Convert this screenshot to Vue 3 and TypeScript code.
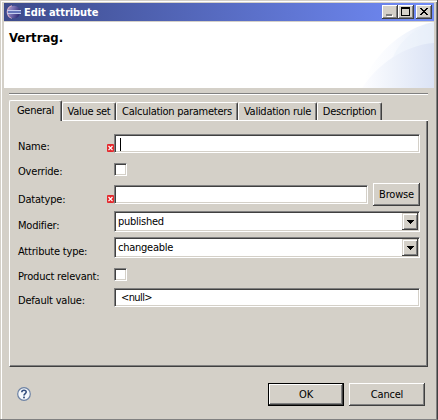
<script setup lang="ts">
import { ref } from 'vue'

interface Field {
  id: string
  label: string
  kind: 'text' | 'check' | 'combo'
  value?: string
  error?: boolean
  caret?: boolean
  browse?: boolean
}

const tabs = [
  { id: 'general', label: 'General' },
  { id: 'values', label: 'Value set' },
  { id: 'calculation', label: 'Calculation parameters' },
  { id: 'validation', label: 'Validation rule' },
  { id: 'description', label: 'Description' },
]
const activeTab = ref('general')

const fields: Field[] = [
  { id: 'name', label: 'Name:', kind: 'text', error: true, caret: true },
  { id: 'override', label: 'Override:', kind: 'check' },
  { id: 'datatype', label: 'Datatype:', kind: 'text', error: true, browse: true },
  { id: 'modifier', label: 'Modifier:', kind: 'combo', value: 'published' },
  { id: 'attrtype', label: 'Attribute type:', kind: 'combo', value: 'changeable' },
  { id: 'relevant', label: 'Product relevant:', kind: 'check' },
  { id: 'default', label: 'Default value:', kind: 'text', value: '<null>' },
]
</script>

<template>
  <div class="window">
    <header class="titlebar">
      <svg class="logo" width="16" height="16" viewBox="0 0 16 16">
        <defs>
          <linearGradient id="orb" x1="0" y1="0" x2="1" y2="0.4">
            <stop offset="0" stop-color="#b9a0c8" />
            <stop offset="0.45" stop-color="#7a72b4" />
            <stop offset="1" stop-color="#35307c" />
          </linearGradient>
        </defs>
        <path d="M6 2C0 4 0 12 6 14" fill="none" stroke="#dcb0c4" stroke-width="1.6" />
        <circle cx="8" cy="8" r="6.3" fill="url(#orb)" />
        <path d="M1 6.5H15M1 9.5H15" stroke="#c3cbee" stroke-width="1" />
        <path d="M2 8H15" stroke="#6474ba" stroke-width="2" />
      </svg>
      <span class="title">Edit attribute</span>
      <button class="ctl"><svg width="12" height="10"><path d="M2 8H8" stroke="#fff" stroke-width="2" transform="translate(1 1)" /><path d="M2 8H8" stroke="#808080" stroke-width="2" /></svg></button>
      <button class="ctl"><svg width="12" height="10" shape-rendering="crispEdges"><path d="M1 0h9v9H1zM2 2v6h7V2z" fill="#000" fill-rule="evenodd" /></svg></button>
      <button class="ctl close"><svg width="12" height="10" shape-rendering="crispEdges"><path d="M2 1h2v1h1v1h2V2h1V1h2v1H9v1H8v1H7v1h1v1h1v1h1v1H8V7H7V6H5v1H4v1H2V7h1V6h1V5h1V4H4V3H3V2H2z" fill="#000" /></svg></button>
    </header>

    <section class="banner">
      <h1>Vertrag.</h1>
      <svg class="waves" width="74" height="66" viewBox="0 0 74 66">
        <defs>
          <linearGradient id="w1"><stop offset="0" stop-color="#fff" /><stop offset=".4" stop-color="#f8fafe" /><stop offset="1" stop-color="#e6edf9" /></linearGradient>
          <linearGradient id="w2"><stop offset="0" stop-color="#fdfdff" /><stop offset=".4" stop-color="#eff3fb" /><stop offset="1" stop-color="#dbe3f5" /></linearGradient>
        </defs>
        <path d="M5 55C19 29 43 6 74 0V66H5z" fill="url(#w1)" />
        <path d="M32 37C40 19 52 8 74 0V66H32z" fill="#e8effa" opacity=".4" />
        <path d="M2 66C17 43 44 23 74 21V66z" fill="url(#w2)" />
      </svg>
    </section>
    <div class="rule"></div>

    <nav class="tabs">
      <button v-for="t in tabs" :key="t.id" :class="['tab', t.id, { active: activeTab === t.id }]" @click="activeTab = t.id"><span>{{ t.label }}</span></button>
    </nav>

    <main class="panel">
      <div v-for="f in fields" :key="f.id" :class="['row', f.id]">
        <label>{{ f.label }}</label>
        <div class="mark">
          <svg v-if="f.error" width="7" height="8" viewBox="0 0 7 8">
            <rect width="7" height="8" rx="1" fill="#e4282c" />
            <path d="M1.5 2L5.5 6.2M5.5 2L1.5 6.2" stroke="#fff" stroke-width="1.2" />
          </svg>
        </div>
        <div v-if="f.kind === 'text'" class="sunken input"><i v-if="f.caret" class="caret"></i><span>{{ f.value }}</span></div>
        <div v-else-if="f.kind === 'combo'" class="sunken combo">
          <span>{{ f.value }}</span>
          <button class="drop"><svg width="7" height="4" shape-rendering="crispEdges"><path d="M0 0h7v1H6v1H5v1H4v1H3V3H2V2H1V1H0z" /></svg></button>
        </div>
        <div v-else class="sunken check"></div>
        <button v-if="f.browse" class="push browse"><span>Browse</span></button>
      </div>
    </main>

    <footer class="actions">
      <svg class="help" width="14" height="14" viewBox="0 0 14 14">
        <circle cx="7" cy="7" r="6.3" fill="#f4f7fb" stroke="#6d82a4" stroke-width="1.2" />
        <path d="M4.8 5.2C4.8 2.6 9.2 2.6 9.2 5.1C9.2 6.7 7 6.6 7 8.6" fill="none" stroke="#344f7e" stroke-width="1.6" />
        <rect x="6.1" y="9.6" width="1.8" height="1.7" fill="#344f7e" />
      </svg>
      <button class="push ok"><span>OK</span></button>
      <button class="push cancel"><span>Cancel</span></button>
    </footer>
  </div>
</template>

<style>
body { margin: 0; background: #d4d0c8; }
</style>

<style scoped>
* { box-sizing: border-box; }
.window {
  width: 438px; height: 420px; background: #d4d0c8; overflow: hidden;
  display: flex; flex-direction: column;
  font: 11px/14px "DejaVu Sans Condensed", "DejaVu Sans", sans-serif; font-stretch: condensed; letter-spacing: -0.2px; color: #000;
  padding: 1px 2px 0 2px;
  border-right: 1px solid #404040; border-bottom: 1px solid #808080;
  box-shadow: inset 1px 0 #d4d0c8, inset 0 1px #d4d0c8, inset 2px 2px #fff, inset -1px 0 #808080;
}
button { font: inherit; letter-spacing: inherit; color: inherit; background: #d4d0c8; border: 0; padding: 0; margin: 0; display: flex; align-items: center; justify-content: center; }
svg { display: block; flex: none; }
span, label { white-space: pre; }
.titlebar { height: 18px; margin: 2px 1px 0 2px; display: flex; align-items: center; padding-right: 2px; background: linear-gradient(90deg, #3d4b8b, #718bf7); flex: none; }
.logo { margin-left: 2px; }
.title { flex: 1; margin: 1px 0 0 2px; color: #fff; font-weight: bold; letter-spacing: -0.08px; }
.ctl { width: 16px; height: 14px; box-shadow: inset -1px -1px #404040, inset 1px 1px #fff, inset -2px -2px #808080; }
.close { margin-left: 2px; }
.banner { height: 66px; margin: 1px 1px 0 2px; background: #fff; display: flex; justify-content: space-between; flex: none; }
h1 { margin: 8px 0 0 5px; font-size: 13px; line-height: 16px; letter-spacing: 0; }
.rule { height: 2px; margin: 5px 7px 0; background: linear-gradient(#808080 50%, #fff 50%); flex: none; }
.tabs { display: flex; align-items: flex-end; height: 21px; margin: 5px 7px 0; box-shadow: inset 0 -1px #fff; flex: none; }
.tab { height: 18px; margin-bottom: 1px; padding-top: 1px; border-top: 1px solid #fff; border-left: 1px solid #fff; border-right: 1px solid #404040; border-radius: 2px 2px 0 0; box-shadow: inset -1px 0 #808080; letter-spacing: -0.27px; }
.tab.active { height: 21px; margin-bottom: 0; padding: 0 0 1px; }
.general { width: 53px; }
.values { width: 54px; }
.calculation { width: 122px; }
.validation { width: 79px; }
.description { width: 65px; }
.panel { height: 246px; margin: 0 7px; padding: 13px 7px 0 8px; border-left: 1px solid #fff; border-right: 1px solid #404040; border-bottom: 1px solid #404040; box-shadow: inset -1px -1px #808080; flex: none; }
.row { display: flex; }
label { width: 89px; align-self: flex-end; margin-bottom: -1px; }
.mark { width: 7px; align-self: flex-end; margin-bottom: 1px; }
.sunken { background: #fff; border: 1px solid; border-color: #808080 #fff #fff #808080; box-shadow: inset 1px 1px #404040, inset -1px -1px #d4d0c8; }
.input { flex: 1; height: 19px; display: flex; align-items: center; padding: 1px 0 0 5px; }
.default .input { padding-left: 6px; letter-spacing: -0.6px; }
.caret { width: 1px; height: 13px; background: #000; }
.combo { flex: 1; height: 21px; display: flex; align-items: center; justify-content: space-between; padding: 1px 1px 1px 3px; }
.combo span { padding-top: 1px; letter-spacing: -0.25px; }
.drop { width: 16px; height: 17px; box-shadow: inset -1px -1px #404040, inset 1px 1px #d4d0c8, inset 2px 2px #fff, inset -2px -2px #808080; }
.check { width: 13px; height: 13px; }
.name { height: 19px; margin-bottom: 10px; }
.override { height: 13px; margin-bottom: 7px; }
.datatype { height: 23px; margin-bottom: 5px; }
.datatype .input { margin-top: 2px; }
.datatype .mark { margin-bottom: 3px; }
.modifier { height: 21px; margin-bottom: 5px; }
.attrtype { height: 21px; margin-bottom: 10px; }
.relevant { height: 13px; margin-bottom: 7px; }
.override label, .relevant label { margin-bottom: -3px; }
.push { height: 23px; box-shadow: inset -1px -1px #404040, inset 1px 1px #fff, inset -2px -2px #808080; }
.browse { width: 47px; margin-left: 5px; }
.actions { display: flex; margin: 16px 10px 0 15px; flex: none; }
.help { margin-top: 4px; }
.ok { width: 76px; margin-left: auto; border: 1px solid #000; }
.cancel { width: 76px; margin-left: 5px; }
</style>
